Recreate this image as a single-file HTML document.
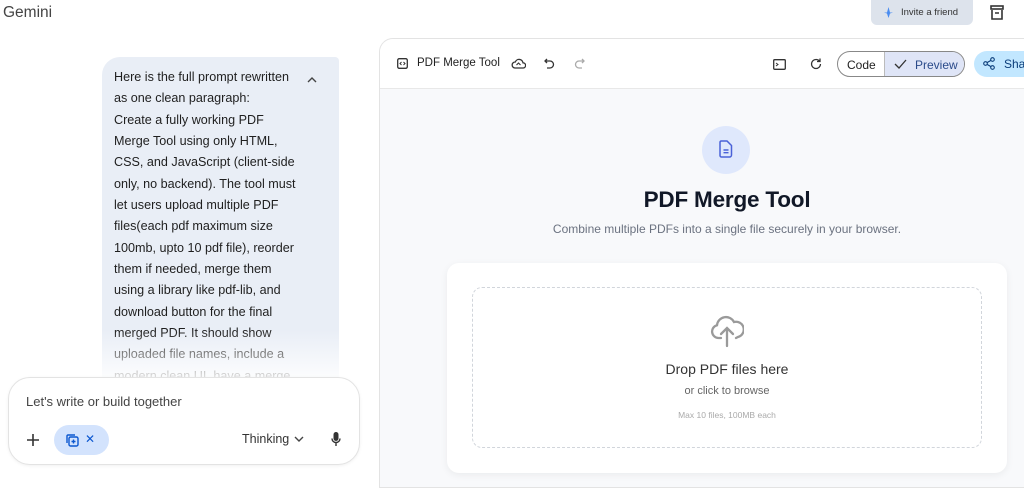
<!DOCTYPE html>
<html><head><meta charset="utf-8"><style>
*{box-sizing:border-box;margin:0;padding:0}
body{width:1024px;height:477px;overflow:hidden;background:#fff;font-family:"Liberation Sans",sans-serif;position:relative;color:#1f1f1f}
.abs{position:absolute}
.bubble{left:102px;top:57px;width:237px;height:330px;background:#e9eef6;border-radius:18px 4px 0 0;}
.bt{left:114px;top:67px;font-size:12.6px;line-height:21.35px;color:#1f1f1f;width:200px}
.fade{left:90px;top:330px;width:270px;height:50px;background:linear-gradient(rgba(255,255,255,0),rgba(255,255,255,.9))}
.input{left:8px;top:377px;width:352px;height:88px;background:#fff;border:1px solid #e3e3e3;border-radius:22px;box-shadow:0 1px 3px rgba(0,0,0,.06)}
.panel{left:379px;top:38px;width:660px;height:450px;background:#f8f9fb;border:1px solid #e3e3e3;border-radius:14px 0 0 0;overflow:hidden}
.hdr{left:0;top:0;width:100%;height:50px;background:#fff;border-bottom:1px solid #e8e8e8}
svg{display:block}
</style></head><body>
<div class="abs" style="left:3px;top:4px;font-size:15.5px;color:#444">Gemini</div>
<div class="abs" style="left:871px;top:0;width:102px;height:25px;background:#dde3ec;border-radius:0 0 6px 6px;font-size:9.5px;color:#333;padding:7px 0 0 30px;white-space:nowrap">Invite a friend</div>
<div class="abs" style="left:884px;top:7px;width:9px;height:11px;"><svg width="9" height="11"><path d="M4.5 0L6 5.5 9 5.5 6 6.5 4.5 11 3 6.5 0 5.5 3 5.5Z" fill="#4a8cf0"/></svg></div>
<div class="abs" style="left:990px;top:5px"><svg width="14" height="16"><rect x="1" y="1" width="12" height="3" fill="none" stroke="#333" stroke-width="1.6"/><path d="M2 5v9h10V5M5 8h4" fill="none" stroke="#333" stroke-width="1.6"/></svg></div>

<div class="abs bubble"></div>
<div class="abs bt">Here is the full prompt rewritten<br>as one clean paragraph:<br>Create a fully working PDF<br>Merge Tool using only HTML,<br>CSS, and JavaScript (client-side<br>only, no backend). The tool must<br>let users upload multiple PDF<br>files(each pdf maximum size<br>100mb, upto 10 pdf file), reorder<br>them if needed, merge them<br>using a library like pdf-lib, and<br>download button for the final<br>merged PDF. It should show<br>uploaded file names, include a<br>modern clean UI, have a merge</div>
<div class="abs" style="left:306px;top:76px"><svg width="12" height="8"><path d="M2 6l4-4 4 4" fill="none" stroke="#444" stroke-width="1.4"/></svg></div>
<div class="abs fade"></div>
<div class="abs input">
 <div class="abs" style="left:17px;top:16px;font-size:13px;color:#444">Let's write or build together</div>
 <div class="abs" style="left:17px;top:55px"><svg width="14" height="14"><path d="M7 1v12M1 7h12" stroke="#333" stroke-width="1.6"/></svg></div>
 <div class="abs" style="left:45px;top:47px;width:55px;height:30px;border-radius:15px;background:#d3e3fd"></div>
 <div class="abs" style="left:56px;top:55px"><svg width="14" height="14"><rect x="4" y="4" width="9" height="9" rx="1.5" fill="none" stroke="#0b57d0" stroke-width="1.4"/><path d="M2 10V3a1 1 0 011-1h7M8.5 6.5v4M6.5 8.5h4" fill="none" stroke="#0b57d0" stroke-width="1.4"/></svg></div>
 <div class="abs" style="left:76px;top:54px;font-size:12px;color:#0b57d0">✕</div>
 <div class="abs" style="left:233px;top:54px;font-size:12.5px;color:#333">Thinking</div>
 <div class="abs" style="left:285px;top:58px"><svg width="10" height="7"><path d="M1 1l4 4 4-4" fill="none" stroke="#444" stroke-width="1.4"/></svg></div>
 <div class="abs" style="left:322px;top:54px"><svg width="10" height="15"><rect x="2.5" y="0" width="5" height="9" rx="2.5" fill="#333"/><path d="M1 6.5a4 4 0 008 0M5 11v3" fill="none" stroke="#333" stroke-width="1.4"/></svg></div>
</div>

<div class="abs panel">
 <div class="abs hdr">
  <div class="abs" style="left:17px;top:19px"><svg width="11" height="11"><rect x=".7" y=".7" width="9.6" height="9.6" rx="1.5" fill="none" stroke="#333" stroke-width="1.3"/><path d="M4.5 4L3 5.5 4.5 7M6.5 4L8 5.5 6.5 7" fill="none" stroke="#333" stroke-width="1"/></svg></div>
  <div class="abs" style="left:37px;top:18px;font-size:11.5px;color:#222">PDF Merge Tool</div>
  <div class="abs" style="left:131px;top:19px"><svg width="15" height="11"><path d="M4 10h8a2.6 2.6 0 000-5.2A4 4 0 004.3 4 3 3 0 004 10z" fill="none" stroke="#333" stroke-width="1.3"/><path d="M5.5 7l2-2 2 2" fill="none" stroke="#333" stroke-width="1.1"/></svg></div>
  <div class="abs" style="left:164px;top:19px"><svg width="11" height="11"><path d="M3 1L1 3l2 2M1 3h5a3.5 3.5 0 010 7H3" fill="none" stroke="#333" stroke-width="1.3"/></svg></div>
  <div class="abs" style="left:194px;top:19px"><svg width="11" height="11"><path d="M8 1l2 2-2 2M10 3H5a3.5 3.5 0 000 7h3" fill="none" stroke="#aaa" stroke-width="1.3"/></svg></div>
  <div class="abs" style="left:393px;top:20px"><svg width="13" height="11"><rect x=".7" y=".7" width="11.6" height="9.6" rx="1" fill="none" stroke="#333" stroke-width="1.3"/><path d="M3 4l2 1.5L3 7" fill="none" stroke="#333" stroke-width="1"/></svg></div>
  <div class="abs" style="left:430px;top:19px"><svg width="12" height="12"><path d="M10.5 6A4.5 4.5 0 116 1.5c1.5 0 2.8.7 3.6 1.8M10 .5v3H7" fill="none" stroke="#333" stroke-width="1.3"/></svg></div>
  <div class="abs" style="left:457px;top:12px;width:128px;height:26px;border:1px solid #888;border-radius:13px;overflow:hidden">
   <div class="abs" style="left:0;top:0;width:46px;height:24px;font-size:12px;padding:6px 0 0 9px;color:#222">Code</div>
   <div class="abs" style="left:46px;top:0;width:82px;height:24px;background:#dfe5f7;border-left:1px solid #bbb"></div>
   <div class="abs" style="left:56px;top:7px"><svg width="13" height="10"><path d="M1 5l4 4 7-8" fill="none" stroke="#333" stroke-width="1.3"/></svg></div>
   <div class="abs" style="left:77px;top:6px;font-size:12px;color:#2a4a8a">Preview</div>
  </div>
  <div class="abs" style="left:594px;top:12px;width:70px;height:26px;background:#c2e7ff;border-radius:13px"></div>
  <div class="abs" style="left:603px;top:18px"><svg width="12" height="13"><circle cx="9.5" cy="2.5" r="1.8" fill="none" stroke="#0b3d7a" stroke-width="1.1"/><circle cx="2.5" cy="6.5" r="1.8" fill="none" stroke="#0b3d7a" stroke-width="1.1"/><circle cx="9.5" cy="10.5" r="1.8" fill="none" stroke="#0b3d7a" stroke-width="1.1"/><path d="M4 5.6l4-2.2M4 7.4l4 2.2" stroke="#0b3d7a" stroke-width="1.1"/></svg></div>
  <div class="abs" style="left:624px;top:18px;font-size:12px;color:#0b3d7a">Share</div>
 </div>
 <div class="abs" style="left:322px;top:87px;width:48px;height:48px;border-radius:50%;background:#dfe8fc"></div>
 <div class="abs" style="left:339px;top:101px"><svg width="14" height="18"><path d="M2 1h6l4.5 4.5V15a2 2 0 01-2 2H2.5A1.5 1.5 0 011 15.5V2.5A1.5 1.5 0 012 1z" fill="none" stroke="#4a62d8" stroke-width="1.5"/><path d="M4.5 10h5M4.5 12.7h5" stroke="#4a62d8" stroke-width="1.4"/></svg></div>
 <div class="abs" style="left:0;top:148px;width:694px;text-align:center;font-size:22.5px;font-weight:bold;color:#111827;letter-spacing:-.2px">PDF Merge Tool</div>
 <div class="abs" style="left:0;top:183px;width:694px;text-align:center;font-size:12px;color:#6b7280">Combine multiple PDFs into a single file securely in your browser.</div>
 <div class="abs" style="left:67px;top:224px;width:560px;height:210px;background:#fff;border-radius:12px;box-shadow:0 2px 8px rgba(0,0,0,.06)"></div>
 <div class="abs" style="left:92px;top:248px;width:510px;height:161px;border:1.3px dashed #d1d5db;border-radius:10px"></div>
 <div class="abs" style="left:330px;top:273px"><svg width="34" height="36"><path d="M11 26H8.5A6.5 6.5 0 017 13.2 9 9 0 0124 10a7 7 0 014 15l-2 1" fill="none" stroke="#9a9a9a" stroke-width="2.3" stroke-linecap="round"/><path d="M17 34V16M11 22l6-6 6 6" fill="none" stroke="#9a9a9a" stroke-width="2.3" stroke-linecap="round"/></svg></div>
 <div class="abs" style="left:0;top:322px;width:694px;text-align:center;font-size:14px;color:#333">Drop PDF files here</div>
 <div class="abs" style="left:0;top:346px;width:694px;text-align:center;font-size:11px;color:#666">or click to browse</div>
 <div class="abs" style="left:0;top:371px;width:694px;text-align:center;font-size:8.5px;color:#aaa">Max 10 files, 100MB each</div>
</div>
</body></html>
